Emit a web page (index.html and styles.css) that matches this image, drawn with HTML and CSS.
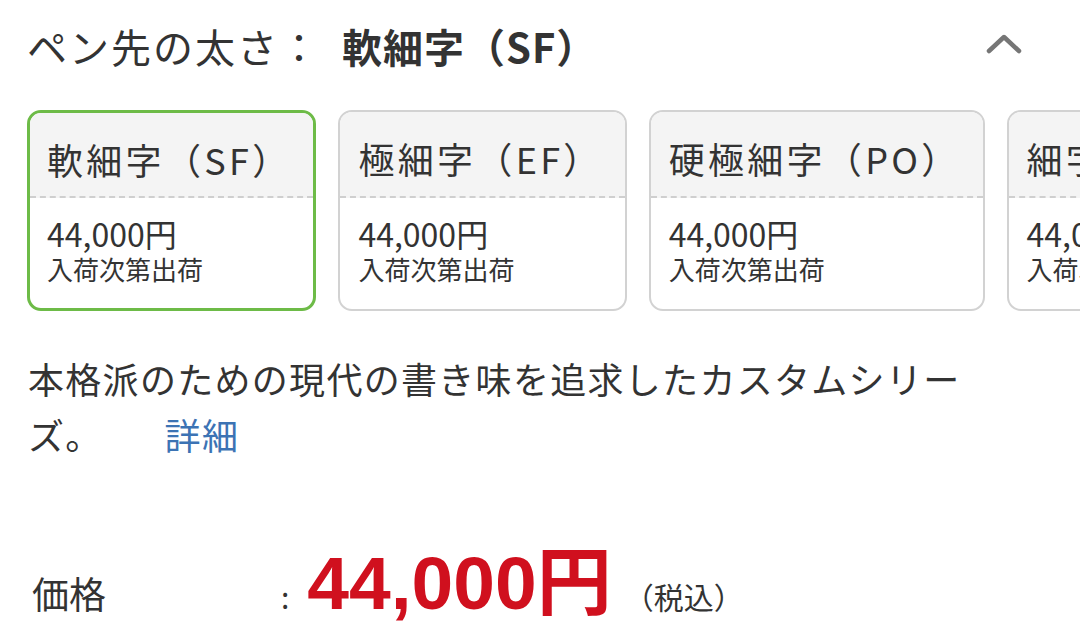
FILE: index.html
```html
<!DOCTYPE html>
<html lang="ja">
<head>
<meta charset="utf-8">
<link rel="stylesheet" href="styles.css">
</head>
<body>
<div class="page">
  <div class="head-row">
    <h2 class="sel-title"><span class="label">ペン先の太さ：</span><span class="value">軟細字（SF）</span></h2>
    <svg class="chevron" width="36" height="22" viewBox="0 0 36 22"><path d="M3 19 L18 5 L33 19" fill="none" stroke="#767676" stroke-width="4.5" stroke-linecap="round" stroke-linejoin="round"/></svg>
  </div>

  <div class="cards">
    <div class="card selected">
      <div class="card-head">軟細字（SF）</div>
      <div class="card-body"><div class="price">44,000円</div><div class="stock">入荷次第出荷</div></div>
    </div>
    <div class="card">
      <div class="card-head">極細字（EF）</div>
      <div class="card-body"><div class="price">44,000円</div><div class="stock">入荷次第出荷</div></div>
    </div>
    <div class="card">
      <div class="card-head">硬極細字（PO）</div>
      <div class="card-body"><div class="price">44,000円</div><div class="stock">入荷次第出荷</div></div>
    </div>
    <div class="card">
      <div class="card-head">細字（F）</div>
      <div class="card-body"><div class="price">44,000円</div><div class="stock">入荷次第出荷</div></div>
    </div>
  </div>

  <p class="desc">本格派のための現代の書き味を追求したカスタムシリーズ。<a class="more" href="#">詳細</a></p>

  <div class="price-row">
    <span class="price-label">価格</span>
    <span class="colon">:</span>
    <span class="big-price">44,000円</span>
    <span class="tax">（税込）</span>
  </div>
</div>
</body>
</html>
```

FILE: styles.css
```css
html, body {
  margin: 0;
  padding: 0;
  background: #fff;
}
body {
  font-family: "Noto Sans CJK JP", "Noto Sans", sans-serif;
  color: #333;
  width: 1080px;
  height: 635px;
  overflow: hidden;
}
.page {
  padding: 16px 0 0 27px;
}
.head-row {
  display: flex;
  align-items: center;
  justify-content: space-between;
  padding-right: 58px;
  height: 60px;
}
.sel-title {
  margin: 0;
  font-size: 40px;
  font-weight: normal;
  line-height: 60px;
  white-space: nowrap;
  letter-spacing: 2px;
}
.sel-title .value {
  font-weight: bold;
  letter-spacing: 1px;
  margin-left: 21px;
}
.chevron {
  display: block;
  margin-top: -6px;
}
.cards {
  display: flex;
  gap: 22px;
  margin-top: 34px;
  white-space: nowrap;
  overflow: hidden;
}
.card {
  flex-shrink: 0;
  border: 2px solid #d2d2d2;
  border-radius: 14px;
  overflow: hidden;
  width: max-content;
}
.card.selected {
  border: 3px solid #6dbb47;
}
.card-head {
  background: #f4f4f4;
  font-size: 36px;
  line-height: 44px;
  height: 86px;
  box-sizing: border-box;
  padding: 24px 22px 0 18px;
  border-bottom: 2px dashed #cfcfcf;
  letter-spacing: 3.3px;
}
.card.selected .card-head {
  height: 85px;
  padding-left: 17px;
}
.card-body {
  padding: 16px 18px 0 18px;
  height: 111px;
  box-sizing: border-box;
}
.card.selected .card-body {
  padding-left: 17px;
  height: 110px;
}
.price {
  font-size: 32px;
  line-height: 38px;
}
.stock {
  font-size: 26px;
  line-height: 34px;
}
.desc {
  margin: 39px 0 0 1px;
  width: 960px;
  font-size: 36px;
  line-height: 56px;
  letter-spacing: 1.3px;
}
.more {
  color: #3c73b4;
  text-decoration: none;
  margin-left: 62px;
}
.price-row {
  display: flex;
  align-items: baseline;
  margin-top: 84px;
  line-height: 1;
  white-space: nowrap;
}
.price-label {
  font-size: 37px;
  width: 249px;
  padding-left: 5px;
}
.colon {
  font-size: 30px;
  margin-right: 18px;
}
.big-price {
  font-family: "Liberation Sans", "Noto Sans CJK JP", sans-serif;
  font-weight: bold;
  font-size: 75px;
  color: #d0101e;
  letter-spacing: 0;
}
.tax {
  font-size: 30px;
  margin-left: 12px;
}
```
